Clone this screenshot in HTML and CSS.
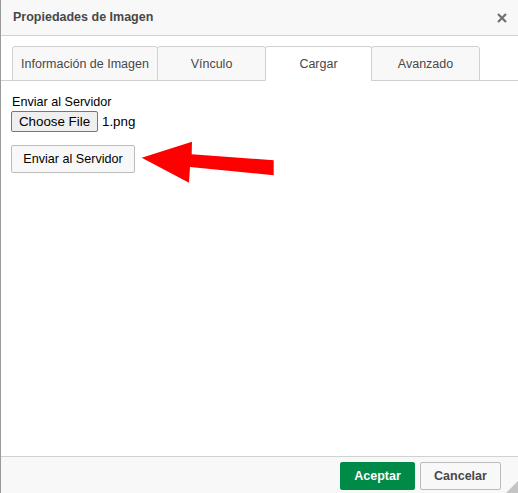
FILE: index.html
```html
<!DOCTYPE html>
<html lang="es">
<head>
<meta charset="utf-8">
<title>Propiedades de Imagen</title>
<link rel="stylesheet" href="styles.css">
</head>
<body>
<div class="dialog">
  <div class="titlebar">
    <span class="title">Propiedades de Imagen</span>
    <span class="close" aria-label="Cerrar">
      <svg width="10" height="10" viewBox="0 0 10 10"><path d="M1 1L9 9M9 1L1 9" stroke="#707070" stroke-width="2.2"/></svg>
    </span>
  </div>
  <div class="tabs">
    <div class="tab tab-info">Información de Imagen</div>
    <div class="tab tab-link">Vínculo</div>
    <div class="tab tab-upload active">Cargar</div>
    <div class="tab tab-adv">Avanzado</div>
  </div>
  <div class="content">
    <div class="label">Enviar al Servidor</div>
    <div class="file-row">
      <span class="choose">Choose File</span>
      <span class="filename">1.png</span>
    </div>
    <div class="send-wrap">
      <button class="send">Enviar al Servidor</button>
      <svg class="arrow" width="140" height="50" viewBox="0 0 140 50">
        <polygon points="0.7,17.7 51,1.7 50.7,14.3 132.7,20.3 132.7,35.3 49,27 48,42.7" fill="#ff0000"/>
      </svg>
    </div>
  </div>
  <div class="footer">
    <button class="btn ok">Aceptar</button>
    <button class="btn cancel">Cancelar</button>
    <span class="grip"></span>
  </div>
</div>
</body>
</html>
```

FILE: styles.css
```css
html, body {
  margin: 0;
  padding: 0;
  background: #ffffff;
}
body {
  font-family: "Liberation Sans", Arial, sans-serif;
  color: #484848;
}
.dialog {
  position: relative;
  width: 518px;
  height: 493px;
  box-sizing: border-box;
  border-left: 1px solid #9a9a9a;
  display: flex;
  flex-direction: column;
  overflow: hidden;
}
.titlebar {
  height: 35px;
  flex: none;
  background: #f8f8f8;
  border-bottom: 1px solid #d1d1d1;
  display: flex;
  align-items: center;
  justify-content: space-between;
  padding: 0 11px 0 12px;
}
.title {
  font-weight: bold;
  font-size: 12.5px;
  color: #484848;
  margin-top: -1px;
}
.close {
  display: flex;
  width: 10px;
  height: 10px;
  margin-top: 1px;
}
.tabs {
  flex: none;
  margin-top: 10px;
  padding-left: 11px;
  height: 34px;
  display: flex;
  border-bottom: 1px solid #d1d1d1;
}
.tab {
  box-sizing: border-box;
  height: 35px;
  border: 1px solid #d1d1d1;
  border-radius: 3px 3px 0 0;
  background: #f8f8f8;
  font-size: 12.5px;
  color: #484848;
  display: flex;
  align-items: center;
  justify-content: center;
}
.tab + .tab { margin-left: -1px; }
.tab-info { width: 146px; }
.tab-link { width: 109px; }
.tab-upload { width: 107px; }
.tab-adv { width: 109px; }
.tab.active {
  background: #ffffff;
  border-bottom-color: #ffffff;
}
.content {
  flex: 1;
  padding: 14px 10px 0 10px;
  font-size: 12px;
}
.label {
  font-size: 12.6px;
  color: #000000;
  line-height: 15px;
  margin-left: 1px;
}
.file-row {
  display: flex;
  align-items: center;
  margin-top: 1px;
  font-size: 13.33px;
  color: #000;
}
.choose {
  box-sizing: border-box;
  height: 21px;
  width: 87px;
  border: 1px solid #767676;
  border-radius: 2px;
  background: #efefef;
  display: flex;
  align-items: center;
  justify-content: center;
  color: #000;
}
.filename {
  margin-left: 4px;
}
.send-wrap {
  position: relative;
  margin-top: 13px;
}
.send {
  box-sizing: border-box;
  width: 124px;
  height: 28px;
  border: 1px solid #bcbcbc;
  border-radius: 2px;
  background: #f8f8f8;
  font-family: "Liberation Sans", Arial, sans-serif;
  font-size: 12.6px;
  color: #000000;
  padding: 0;
}
.arrow {
  position: absolute;
  left: 130px;
  top: -5px;
}
.footer {
  flex: none;
  height: 37px;
  background: #f8f8f8;
  border-top: 1px solid #d1d1d1;
  display: flex;
  justify-content: flex-end;
  align-items: flex-start;
  padding: 5px 17px 0 0;
  box-sizing: border-box;
  position: relative;
}
.btn {
  box-sizing: border-box;
  height: 28px;
  border-radius: 2px;
  font-family: "Liberation Sans", Arial, sans-serif;
  font-weight: bold;
  font-size: 12.5px;
  padding: 0;
}
.ok {
  width: 75px;
  background: #008a47;
  border: 1px solid #008a47;
  color: #ffffff;
}
.cancel {
  width: 81px;
  margin-left: 5px;
  background: #f8f8f8;
  border: 1px solid #bcbcbc;
  color: #484848;
}
.grip {
  position: absolute;
  right: 0;
  bottom: 0;
  width: 0;
  height: 0;
  border-left: 12px solid transparent;
  border-bottom: 12px solid #c4c4c4;
}
```
